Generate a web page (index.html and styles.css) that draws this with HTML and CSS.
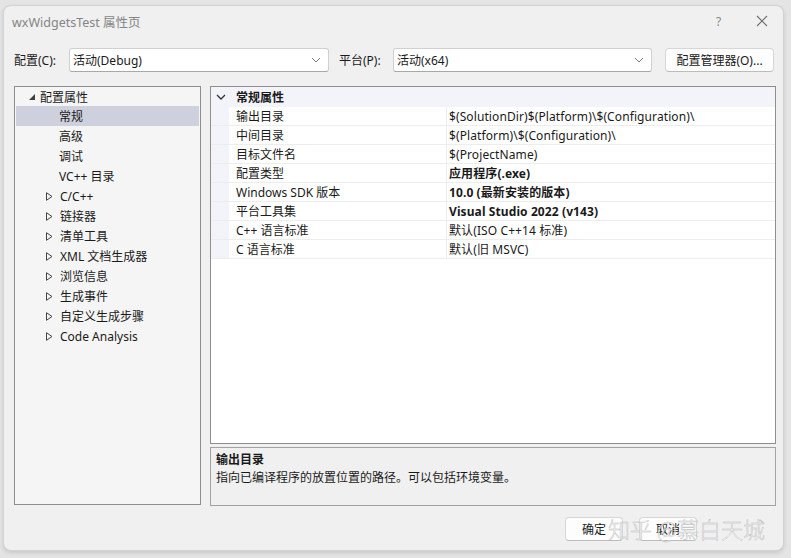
FILE: index.html
```html
<!DOCTYPE html>
<html lang="zh">
<head>
<meta charset="utf-8">
<title>wxWidgetsTest 属性页</title>
<link rel="stylesheet" href="styles.css">
</head>
<body>
<div class="window">
  <div class="titlebar">
    <span class="title">wxWidgetsTest 属性页</span>
    <span class="help">?</span>
    <span class="close"><svg width="12" height="12" viewBox="0 0 12 12"><path d="M1 1L11 11M11 1L1 11" stroke="#6e6e6e" stroke-width="1.1" fill="none"/></svg></span>
  </div>
  <div class="toolbar">
    <label class="lbl">配置(C):</label>
    <div class="combo combo-config"><span>活动(Debug)</span><svg class="chev" width="10" height="6" viewBox="0 0 10 6"><path d="M1 1L5 5L9 1" stroke="#7a7a7a" fill="none" stroke-width="1"/></svg></div>
    <label class="lbl lbl-plat">平台(P):</label>
    <div class="combo combo-plat"><span>活动(x64)</span><svg class="chev" width="10" height="6" viewBox="0 0 10 6"><path d="M1 1L5 5L9 1" stroke="#7a7a7a" fill="none" stroke-width="1"/></svg></div>
    <button class="btn btn-mgr">配置管理器(O)...</button>
  </div>
  <div class="main">
    <div class="tree">
      <div class="node open"><span class="tri-open"></span><span class="txt">配置属性</span></div>
      <div class="node leaf sel"><span class="txt">常规</span></div>
      <div class="node leaf"><span class="txt">高级</span></div>
      <div class="node leaf"><span class="txt">调试</span></div>
      <div class="node leaf"><span class="txt">VC++ 目录</span></div>
      <div class="node closed"><svg class="tri" width="7" height="9" viewBox="0 0 7 9"><path d="M0.5 0.7L6 4.5L0.5 8.3Z" fill="none" stroke="#444" stroke-width="1"/></svg><span class="txt">C/C++</span></div>
      <div class="node closed"><svg class="tri" width="7" height="9" viewBox="0 0 7 9"><path d="M0.5 0.7L6 4.5L0.5 8.3Z" fill="none" stroke="#444" stroke-width="1"/></svg><span class="txt">链接器</span></div>
      <div class="node closed"><svg class="tri" width="7" height="9" viewBox="0 0 7 9"><path d="M0.5 0.7L6 4.5L0.5 8.3Z" fill="none" stroke="#444" stroke-width="1"/></svg><span class="txt">清单工具</span></div>
      <div class="node closed"><svg class="tri" width="7" height="9" viewBox="0 0 7 9"><path d="M0.5 0.7L6 4.5L0.5 8.3Z" fill="none" stroke="#444" stroke-width="1"/></svg><span class="txt">XML 文档生成器</span></div>
      <div class="node closed"><svg class="tri" width="7" height="9" viewBox="0 0 7 9"><path d="M0.5 0.7L6 4.5L0.5 8.3Z" fill="none" stroke="#444" stroke-width="1"/></svg><span class="txt">浏览信息</span></div>
      <div class="node closed"><svg class="tri" width="7" height="9" viewBox="0 0 7 9"><path d="M0.5 0.7L6 4.5L0.5 8.3Z" fill="none" stroke="#444" stroke-width="1"/></svg><span class="txt">生成事件</span></div>
      <div class="node closed"><svg class="tri" width="7" height="9" viewBox="0 0 7 9"><path d="M0.5 0.7L6 4.5L0.5 8.3Z" fill="none" stroke="#444" stroke-width="1"/></svg><span class="txt">自定义生成步骤</span></div>
      <div class="node closed"><svg class="tri" width="7" height="9" viewBox="0 0 7 9"><path d="M0.5 0.7L6 4.5L0.5 8.3Z" fill="none" stroke="#444" stroke-width="1"/></svg><span class="txt">Code Analysis</span></div>
    </div>
    <div class="right">
      <div class="grid">
        <div class="ghead"><svg class="gchev" width="10" height="6" viewBox="0 0 10 6"><path d="M1 1L5 5L9 1" stroke="#333" fill="none" stroke-width="1.3"/></svg><span>常规属性</span></div>
        <div class="grow"><span class="gut"></span><span class="name">输出目录</span><span class="val">$(SolutionDir)$(Platform)\$(Configuration)\</span></div>
        <div class="grow"><span class="gut"></span><span class="name">中间目录</span><span class="val">$(Platform)\$(Configuration)\</span></div>
        <div class="grow"><span class="gut"></span><span class="name">目标文件名</span><span class="val">$(ProjectName)</span></div>
        <div class="grow"><span class="gut"></span><span class="name">配置类型</span><span class="val b">应用程序(.exe)</span></div>
        <div class="grow"><span class="gut"></span><span class="name">Windows SDK 版本</span><span class="val b">10.0 (最新安装的版本)</span></div>
        <div class="grow"><span class="gut"></span><span class="name">平台工具集</span><span class="val b">Visual Studio 2022 (v143)</span></div>
        <div class="grow"><span class="gut"></span><span class="name">C++ 语言标准</span><span class="val">默认(ISO C++14 标准)</span></div>
        <div class="grow"><span class="gut"></span><span class="name">C 语言标准</span><span class="val">默认(旧 MSVC)</span></div>
      </div>
      <div class="desc">
        <div class="desc-title">输出目录</div>
        <div class="desc-text">指向已编译程序的放置位置的路径。可以包括环境变量。</div>
      </div>
    </div>
  </div>
  <div class="footer">
    <button class="btn btn-ok">确定</button>
    <button class="btn btn-cancel">取消</button>
  </div>
  <div class="watermark">知乎 @慕白天城</div>
</div>
</body>
</html>
```
FILE: styles.css
```css
html, body {
  margin: 0;
  padding: 0;
}
body {
  background: #e4e4e4;
  width: 791px;
  height: 558px;
  overflow: hidden;
  font-family: "Segoe UI", "Noto Sans", "Noto Sans CJK SC", sans-serif;
  font-size: 12px;
  color: #1a1a1a;
}
.window {
  position: relative;
  margin: 5px 0 0 3px;
  width: 781px;
  height: 546px;
  background: #f0f0f0;
  border: 1px solid #d2d2d2;
  border-radius: 8px;
  box-shadow: 0 2px 4px rgba(0,0,0,0.12);
  box-sizing: border-box;
  display: flex;
  flex-direction: column;
}
.titlebar {
  height: 30px;
  display: flex;
  align-items: center;
  padding: 0 0 0 8px;
}
.title {
  color: #858585;
  font-size: 12.5px;
  flex: 1;
}
.help {
  color: #8a8a8a;
  font-size: 12px;
  width: 12px;
  margin-right: 28px;
}
.close {
  width: 12px;
  height: 12px;
  display: flex;
  margin-right: 15px;
}
.toolbar {
  display: flex;
  align-items: center;
  height: 24px;
  margin-top: 12px;
  padding-left: 10px;
}
.lbl {
  width: 55px;
  white-space: nowrap;
}
.lbl-plat {
  width: 54px;
  margin-left: 10px;
}
.combo {
  box-sizing: border-box;
  height: 24px;
  background: #ffffff;
  border: 1px solid #d0d0d0;
  border-bottom-color: #a8a8a8;
  border-radius: 3px;
  display: flex;
  align-items: center;
  padding: 0 7px 0 3px;
  justify-content: space-between;
}
.combo-config { width: 260px; }
.combo-plat { width: 259px; }
.chev { flex: none; }
.btn {
  font-family: inherit;
  font-size: 12px;
  color: #1a1a1a;
  background: #fdfdfd;
  border: 1px solid #d6d6d6;
  border-bottom-color: #bcbcbc;
  border-radius: 4px;
  height: 24px;
  padding: 0;
}
.btn-mgr {
  width: 109px;
  margin-left: 13px;
}
.main {
  display: flex;
  margin-top: 14px;
  padding-left: 10px;
}
.tree {
  box-sizing: border-box;
  width: 187px;
  height: 419px;
  background: #f5f5f5;
  border: 1px solid #8e8e8e;
  padding: 0 1px;
}
.node {
  height: 20px;
  display: flex;
  align-items: center;
  white-space: nowrap;
}
.node.open { padding-left: 13px; height: 19px; }
.tri-open {
  width: 0;
  height: 0;
  border-left: 6px solid transparent;
  border-bottom: 6px solid #404040;
  margin-right: 5px;
}
.node.leaf { padding-left: 43px; }
.node.closed { padding-left: 30px; }
.tri { margin-right: 7px; }
.node.sel { background: #cfd0dd; }
.right {
  margin-left: 9px;
  display: flex;
  flex-direction: column;
  width: 566px;
}
.grid {
  box-sizing: border-box;
  height: 358px;
  background: #ffffff;
  border: 1px solid #8e8e8e;
}
.ghead {
  height: 20px;
  display: flex;
  align-items: center;
  background: #f2f4f9;
  font-weight: bold;
  padding-left: 5px;
}
.gchev { margin-right: 10px; }
.grow {
  height: 19px;
  display: flex;
  align-items: center;
  border-bottom: 1px solid #ededed;
  box-sizing: border-box;
  white-space: nowrap;
}
.gut {
  width: 18px;
  height: 100%;
  background: #f2f4f9;
}
.name {
  width: 218px;
  padding-left: 7px;
  box-sizing: border-box;
  height: 100%;
  display: flex;
  align-items: center;
  border-right: 1px solid #ededed;
}
.val {
  padding-left: 2px;
  letter-spacing: 0.1px;
}
.val.b { font-weight: bold; }
.desc {
  box-sizing: border-box;
  margin-top: 3px;
  height: 59px;
  border: 1px solid #a2a2a2;
  background: #f0f0f0;
  padding: 3px 0 0 5px;
  line-height: 18px;
}
.desc-title { font-weight: bold; }
.footer {
  display: flex;
  margin-top: 11px;
  padding-left: 561px;
  gap: 16px;
}
.btn-ok, .btn-cancel { width: 58px; }
.watermark {
  position: absolute;
  left: 604px;
  top: 506px;
  font-family: "Noto Sans CJK SC", sans-serif;
  font-size: 22px;
  font-weight: 300;
  color: rgba(255,255,255,0.85);
  -webkit-text-stroke: 0.5px rgba(150,150,150,0.6);
  white-space: nowrap;
  pointer-events: none;
}
```
